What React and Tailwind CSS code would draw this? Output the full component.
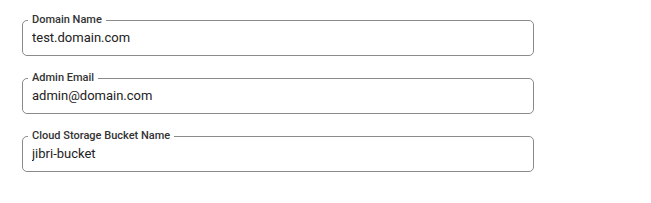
import React from "react";

const fields = [
  { label: "Domain Name", value: "test.domain.com" },
  { label: "Admin Email", value: "admin@domain.com" },
  { label: "Cloud Storage Bucket Name", value: "jibri-bucket" },
];

export default function App() {
  return (
    <div className="w-[651px] h-[203px] bg-white font-['Roboto',sans-serif] pl-[22px] pt-[14px]">
      <div className="flex flex-col gap-[16px] w-[512px]">
        {fields.map((f) => (
          <fieldset
            key={f.label}
            className="border border-[#8a8a8a] rounded-[5px] px-[5px] pb-[9px] m-0 min-w-0"
          >
            <legend className="px-[4px] ml-0 text-[11px] leading-[12px] font-medium text-[#333]">
              {f.label}
            </legend>
            <input
              readOnly
              value={f.value}
              className="block w-full outline-none bg-transparent px-[4px] pt-[4px] text-[13px] leading-[16px] text-[#222]"
            />
          </fieldset>
        ))}
      </div>
    </div>
  );
}
